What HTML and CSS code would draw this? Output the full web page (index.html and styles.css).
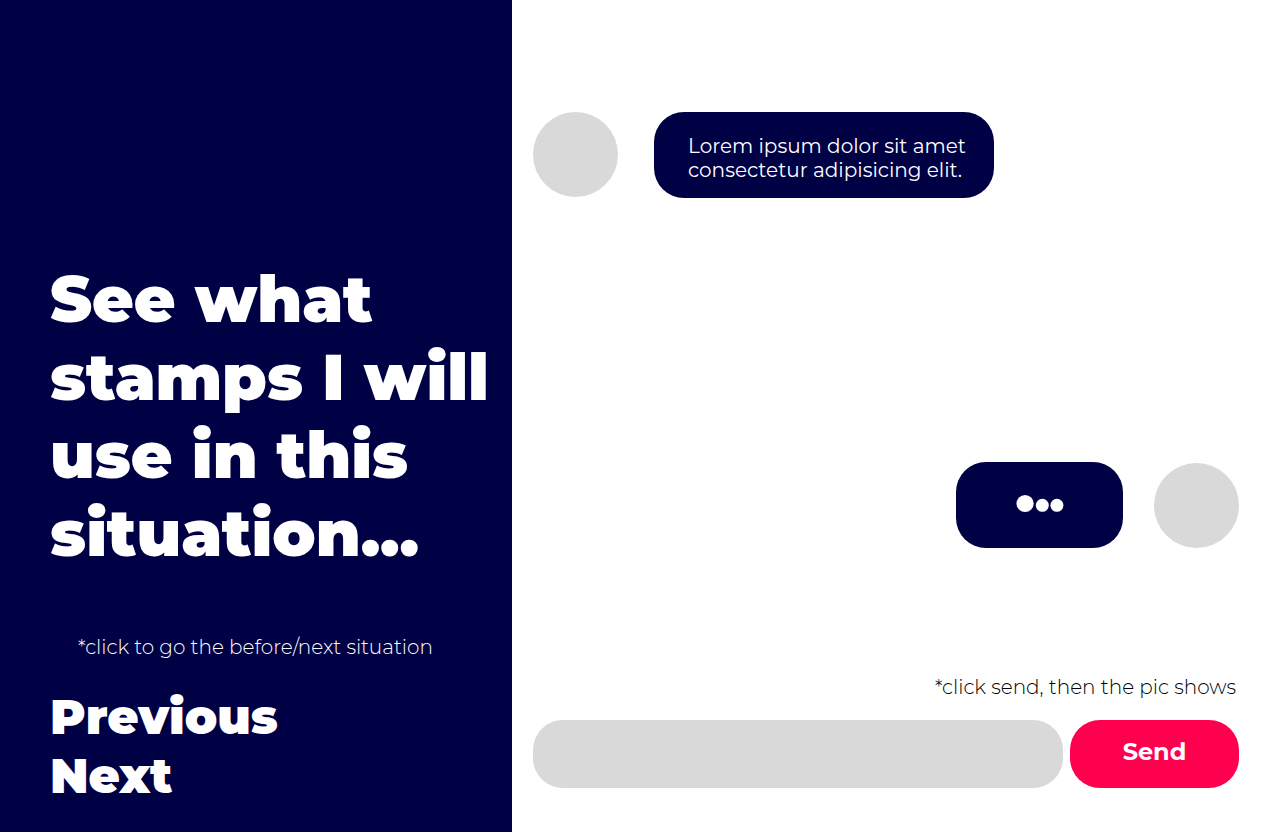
FILE: index.html
```html
<!DOCTYPE html>
<html lang="en">
<head>
<meta charset="utf-8">
<meta name="viewport" content="width=device-width, initial-scale=1">
<title>Stamp situations</title>
<link rel="stylesheet" href="styles.css">
</head>
<body>
<main class="page">
  <section class="intro">
    <h1 class="title">See what<br>stamps I will<br>use in this<br>situation...</h1>
    <p class="hint hint-nav">*click to go the before/next situation</p>
    <nav class="nav">
      <a class="nav-link" href="#previous">Previous</a>
      <a class="nav-link" href="#next">Next</a>
    </nav>
  </section>
  <section class="chat">
    <div class="row">
      <div class="avatar"></div>
      <p class="bubble">Lorem ipsum dolor sit amet<br>consectetur adipisicing elit.</p>
    </div>
    <div class="row reply">
      <div class="bubble typing" role="img" aria-label="Typing">
        <svg class="dots" viewBox="0 0 48 20" aria-hidden="true"><circle cx="9.1" cy="8.5" r="8.6"/><circle cx="26.3" cy="10.3" r="6.5"/><circle cx="40.9" cy="10.3" r="6.5"/></svg>
      </div>
      <div class="avatar"></div>
    </div>
    <form class="composer" action="#">
      <label class="hint hint-send" for="message">*click send, then the pic shows</label>
      <div class="controls">
        <input class="field" id="message" type="text">
        <button class="send" type="button">Send</button>
      </div>
    </form>
  </section>
</main>
</body>
</html>
```
FILE: styles.css
```css
* { box-sizing: border-box; }
body { margin: 0; font-family: Montserrat, Inter, "Open Sans", sans-serif; }
h1, p { margin: 0; }
.page { display: grid; grid-template-columns: 2fr 3fr; min-height: 100vh; }
.intro { display: flex; flex-direction: column; justify-content: flex-end; padding: 0 0 26px 50px; background: #000045; color: #fff; white-space: nowrap; }
.title { font-size: 64px; line-height: 78px; font-weight: 900; }
.hint { font-size: 20px; line-height: 24px; font-weight: 300; white-space: nowrap; }
.hint-nav { margin: 63px 0 29px 28px; }
.nav { display: flex; flex-direction: column; align-items: flex-start; }
.nav-link { color: inherit; text-decoration: none; font-size: 48px; line-height: 59px; font-weight: 900; }
.chat { display: flex; flex-direction: column; padding: 112px 41px 44px 21px; }
.row { display: flex; align-items: flex-start; gap: 36px; }
.avatar { flex: none; width: 85px; height: 85px; border-radius: 50%; background: #d9d9d9; }
.bubble { min-width: 340px; padding: 22px 28px 16px 34px; border-radius: 30px; background: #000045; color: #fff; font-size: 20px; line-height: 24px; white-space: nowrap; }
.reply { align-items: flex-end; justify-content: flex-end; gap: 31px; margin-top: 264px; }
.typing { display: flex; align-items: center; justify-content: center; min-width: 167px; height: 86px; padding: 0; }
.dots { width: 48px; height: 20px; overflow: visible; fill: #fff; }
.composer { display: flex; flex-direction: column; margin-top: auto; }
.hint-send { align-self: flex-end; margin: 0 3px 21px 0; color: #000; }
.controls { display: flex; gap: 7px; }
.field { flex: 1; min-width: 0; height: 68px; padding: 0 28px; border: 0; border-radius: 30px; background: #d9d9d9; font: inherit; font-size: 20px; }
.send { width: 169px; height: 68px; padding: 0 0 6px; border: 0; border-radius: 30px; background: #ff004f; color: #fff; font-family: inherit; font-size: 24px; font-weight: 700; }
```
